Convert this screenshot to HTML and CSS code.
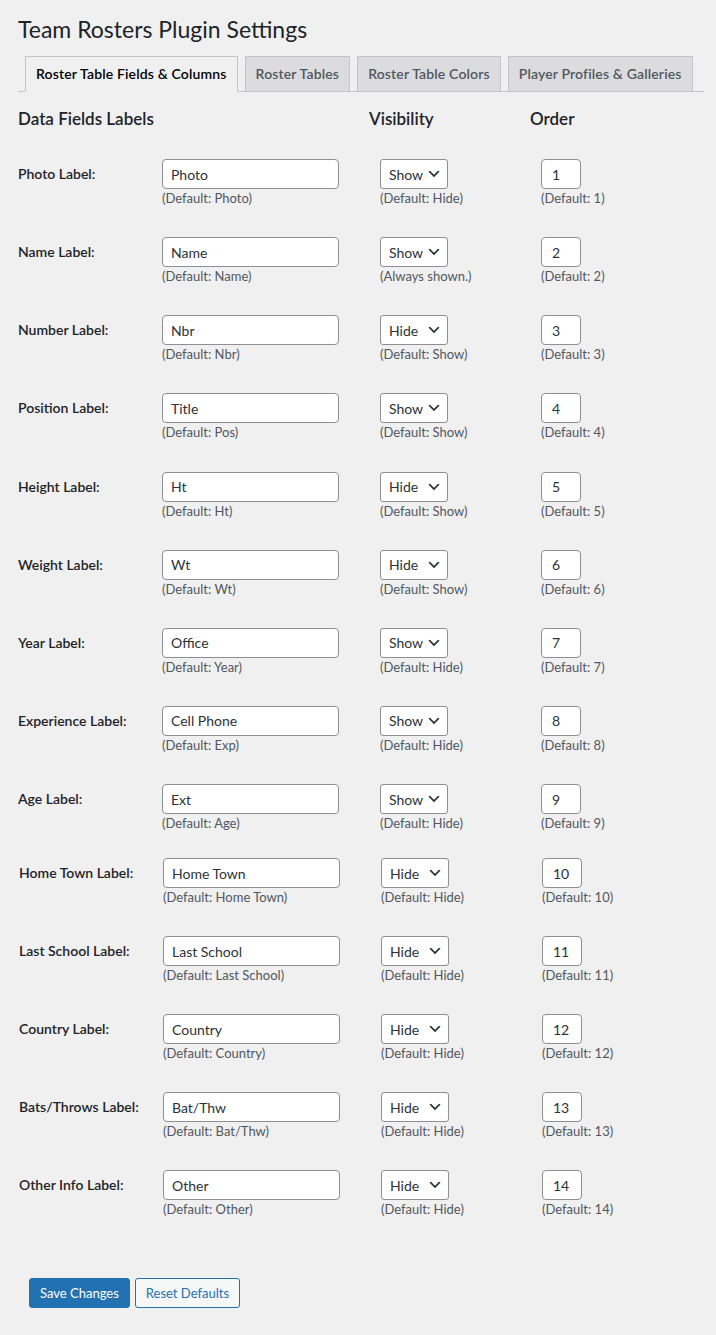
FILE: index.html
```html
<!DOCTYPE html>
<html lang="en">
<head>
<meta charset="utf-8">
<title>Team Rosters Plugin Settings</title>
<link rel="stylesheet" href="styles.css">
</head>
<body>
<div class="wrap">
  <h1 class="page-title">Team Rosters Plugin Settings</h1>
  <nav class="nav-tab-wrapper">
    <a class="nav-tab nav-tab-active" href="#">Roster Table Fields &amp; Columns</a>
    <a class="nav-tab" href="#">Roster Tables</a>
    <a class="nav-tab" href="#">Roster Table Colors</a>
    <a class="nav-tab" href="#">Player Profiles &amp; Galleries</a>
  </nav>
  <form class="settings-form">
    <div class="fields-head">
      <div class="head-cell">Data Fields Labels</div>
      <div class="head-cell"></div>
      <div class="head-cell">Visibility</div>
      <div class="head-cell">Order</div>
    </div>
    <div class="fields-table">
      <div class="field-row">
        <label class="field-label">Photo Label:</label>
        <div class="cell"><input class="text-input" type="text" value="Photo"><p class="desc">(Default: Photo)</p></div>
        <div class="cell cell-pad"><span class="select-wrap"><select class="vis-select"><option selected>Show</option><option>Hide</option></select><svg class="chev" viewBox="0 0 20 20"><path d="M5 6l5 5 5-5 2 1-7 7-7-7 2-1z"/></svg></span><p class="desc">(Default: Hide)</p></div>
        <div class="cell cell-pad"><input class="num-input" type="number" value="1"><p class="desc">(Default: 1)</p></div>
      </div>
      <div class="field-row">
        <label class="field-label">Name Label:</label>
        <div class="cell"><input class="text-input" type="text" value="Name"><p class="desc">(Default: Name)</p></div>
        <div class="cell cell-pad"><span class="select-wrap"><select class="vis-select"><option selected>Show</option><option>Hide</option></select><svg class="chev" viewBox="0 0 20 20"><path d="M5 6l5 5 5-5 2 1-7 7-7-7 2-1z"/></svg></span><p class="desc">(Always shown.)</p></div>
        <div class="cell cell-pad"><input class="num-input" type="number" value="2"><p class="desc">(Default: 2)</p></div>
      </div>
      <div class="field-row">
        <label class="field-label">Number Label:</label>
        <div class="cell"><input class="text-input" type="text" value="Nbr"><p class="desc">(Default: Nbr)</p></div>
        <div class="cell cell-pad"><span class="select-wrap"><select class="vis-select"><option>Show</option><option selected>Hide</option></select><svg class="chev" viewBox="0 0 20 20"><path d="M5 6l5 5 5-5 2 1-7 7-7-7 2-1z"/></svg></span><p class="desc">(Default: Show)</p></div>
        <div class="cell cell-pad"><input class="num-input" type="number" value="3"><p class="desc">(Default: 3)</p></div>
      </div>
      <div class="field-row">
        <label class="field-label">Position Label:</label>
        <div class="cell"><input class="text-input" type="text" value="Title"><p class="desc">(Default: Pos)</p></div>
        <div class="cell cell-pad"><span class="select-wrap"><select class="vis-select"><option selected>Show</option><option>Hide</option></select><svg class="chev" viewBox="0 0 20 20"><path d="M5 6l5 5 5-5 2 1-7 7-7-7 2-1z"/></svg></span><p class="desc">(Default: Show)</p></div>
        <div class="cell cell-pad"><input class="num-input" type="number" value="4"><p class="desc">(Default: 4)</p></div>
      </div>
      <div class="field-row">
        <label class="field-label">Height Label:</label>
        <div class="cell"><input class="text-input" type="text" value="Ht"><p class="desc">(Default: Ht)</p></div>
        <div class="cell cell-pad"><span class="select-wrap"><select class="vis-select"><option>Show</option><option selected>Hide</option></select><svg class="chev" viewBox="0 0 20 20"><path d="M5 6l5 5 5-5 2 1-7 7-7-7 2-1z"/></svg></span><p class="desc">(Default: Show)</p></div>
        <div class="cell cell-pad"><input class="num-input" type="number" value="5"><p class="desc">(Default: 5)</p></div>
      </div>
      <div class="field-row">
        <label class="field-label">Weight Label:</label>
        <div class="cell"><input class="text-input" type="text" value="Wt"><p class="desc">(Default: Wt)</p></div>
        <div class="cell cell-pad"><span class="select-wrap"><select class="vis-select"><option>Show</option><option selected>Hide</option></select><svg class="chev" viewBox="0 0 20 20"><path d="M5 6l5 5 5-5 2 1-7 7-7-7 2-1z"/></svg></span><p class="desc">(Default: Show)</p></div>
        <div class="cell cell-pad"><input class="num-input" type="number" value="6"><p class="desc">(Default: 6)</p></div>
      </div>
      <div class="field-row">
        <label class="field-label">Year Label:</label>
        <div class="cell"><input class="text-input" type="text" value="Office"><p class="desc">(Default: Year)</p></div>
        <div class="cell cell-pad"><span class="select-wrap"><select class="vis-select"><option selected>Show</option><option>Hide</option></select><svg class="chev" viewBox="0 0 20 20"><path d="M5 6l5 5 5-5 2 1-7 7-7-7 2-1z"/></svg></span><p class="desc">(Default: Hide)</p></div>
        <div class="cell cell-pad"><input class="num-input" type="number" value="7"><p class="desc">(Default: 7)</p></div>
      </div>
      <div class="field-row">
        <label class="field-label">Experience Label:</label>
        <div class="cell"><input class="text-input" type="text" value="Cell Phone"><p class="desc">(Default: Exp)</p></div>
        <div class="cell cell-pad"><span class="select-wrap"><select class="vis-select"><option selected>Show</option><option>Hide</option></select><svg class="chev" viewBox="0 0 20 20"><path d="M5 6l5 5 5-5 2 1-7 7-7-7 2-1z"/></svg></span><p class="desc">(Default: Hide)</p></div>
        <div class="cell cell-pad"><input class="num-input" type="number" value="8"><p class="desc">(Default: 8)</p></div>
      </div>
      <div class="field-row">
        <label class="field-label">Age Label:</label>
        <div class="cell"><input class="text-input" type="text" value="Ext"><p class="desc">(Default: Age)</p></div>
        <div class="cell cell-pad"><span class="select-wrap"><select class="vis-select"><option selected>Show</option><option>Hide</option></select><svg class="chev" viewBox="0 0 20 20"><path d="M5 6l5 5 5-5 2 1-7 7-7-7 2-1z"/></svg></span><p class="desc">(Default: Hide)</p></div>
        <div class="cell cell-pad"><input class="num-input" type="number" value="9"><p class="desc">(Default: 9)</p></div>
      </div>
    </div>
    <div class="fields-table fields-table-extra">
      <div class="field-row">
        <label class="field-label">Home Town Label:</label>
        <div class="cell"><input class="text-input" type="text" value="Home Town"><p class="desc">(Default: Home Town)</p></div>
        <div class="cell cell-pad"><span class="select-wrap"><select class="vis-select"><option>Show</option><option selected>Hide</option></select><svg class="chev" viewBox="0 0 20 20"><path d="M5 6l5 5 5-5 2 1-7 7-7-7 2-1z"/></svg></span><p class="desc">(Default: Hide)</p></div>
        <div class="cell cell-pad"><input class="num-input" type="number" value="10"><p class="desc">(Default: 10)</p></div>
      </div>
      <div class="field-row">
        <label class="field-label">Last School Label:</label>
        <div class="cell"><input class="text-input" type="text" value="Last School"><p class="desc">(Default: Last School)</p></div>
        <div class="cell cell-pad"><span class="select-wrap"><select class="vis-select"><option>Show</option><option selected>Hide</option></select><svg class="chev" viewBox="0 0 20 20"><path d="M5 6l5 5 5-5 2 1-7 7-7-7 2-1z"/></svg></span><p class="desc">(Default: Hide)</p></div>
        <div class="cell cell-pad"><input class="num-input" type="number" value="11"><p class="desc">(Default: 11)</p></div>
      </div>
      <div class="field-row">
        <label class="field-label">Country Label:</label>
        <div class="cell"><input class="text-input" type="text" value="Country"><p class="desc">(Default: Country)</p></div>
        <div class="cell cell-pad"><span class="select-wrap"><select class="vis-select"><option>Show</option><option selected>Hide</option></select><svg class="chev" viewBox="0 0 20 20"><path d="M5 6l5 5 5-5 2 1-7 7-7-7 2-1z"/></svg></span><p class="desc">(Default: Hide)</p></div>
        <div class="cell cell-pad"><input class="num-input" type="number" value="12"><p class="desc">(Default: 12)</p></div>
      </div>
      <div class="field-row">
        <label class="field-label">Bats/Throws Label:</label>
        <div class="cell"><input class="text-input" type="text" value="Bat/Thw"><p class="desc">(Default: Bat/Thw)</p></div>
        <div class="cell cell-pad"><span class="select-wrap"><select class="vis-select"><option>Show</option><option selected>Hide</option></select><svg class="chev" viewBox="0 0 20 20"><path d="M5 6l5 5 5-5 2 1-7 7-7-7 2-1z"/></svg></span><p class="desc">(Default: Hide)</p></div>
        <div class="cell cell-pad"><input class="num-input" type="number" value="13"><p class="desc">(Default: 13)</p></div>
      </div>
      <div class="field-row">
        <label class="field-label">Other Info Label:</label>
        <div class="cell"><input class="text-input" type="text" value="Other"><p class="desc">(Default: Other)</p></div>
        <div class="cell cell-pad"><span class="select-wrap"><select class="vis-select"><option>Show</option><option selected>Hide</option></select><svg class="chev" viewBox="0 0 20 20"><path d="M5 6l5 5 5-5 2 1-7 7-7-7 2-1z"/></svg></span><p class="desc">(Default: Hide)</p></div>
        <div class="cell cell-pad"><input class="num-input" type="number" value="14"><p class="desc">(Default: 14)</p></div>
      </div>
    </div>
    <p class="submit">
      <button type="submit" class="button button-primary">Save Changes</button>
      <button type="button" class="button button-secondary">Reset Defaults</button>
    </p>
  </form>
</div>
</body>
</html>
```

FILE: styles.css
```css
:root { --f: Lato, "Noto Sans", sans-serif; }
html, body { margin: 0; padding: 0; background: #f0f0f1; }
body { font-family: var(--f); color: #1d2327; font-size: 13px; }
.wrap { padding: 0 12px 0 18px; }
.page-title { font-size: 23px; font-weight: 400; margin: 0; padding: 14px 0 3px; line-height: 30px; }
.nav-tab-wrapper { display: flex; border-bottom: 1px solid #c3c4c7; padding-top: 9px; }
.nav-tab { margin-left: 7px; padding: 5px 10px; border: 1px solid #c3c4c7; border-bottom: none; background: #dcdcde; color: #50575e; font-size: 14px; font-weight: 600; line-height: 24px; letter-spacing: 0.15px; text-decoration: none; white-space: nowrap; }
.nav-tab-active { background: #f0f0f1; color: #000; margin-bottom: -1px; border-bottom: 1px solid #f0f0f1; }
.fields-head { display: grid; grid-template-columns: 144px 207px 161px 1fr; padding-top: 15px; height: 52px; }
.head-cell { font-size: 17px; font-weight: 600; line-height: 24px; white-space: nowrap; }
.field-row { display: grid; grid-template-columns: 144px 207px 161px 1fr; height: 78.125px; }
.fields-table-extra { margin: -4.125px 0 0 1px; }
.fields-table-extra .field-row { height: 78px; }
.field-label { font-size: 14px; font-weight: 600; line-height: 30px; white-space: nowrap; }
.cell-pad { padding-left: 11px; }
.text-input { box-sizing: border-box; width: 177px; height: 30px; border: 1px solid #8c8f94; border-radius: 4px; padding: 0 8px; font: 14px var(--f); color: #2c3338; background: #fff; margin: 0; display: block; }
.select-wrap { position: relative; display: block; width: 68px; height: 30px; }
.vis-select { appearance: none; -webkit-appearance: none; box-sizing: border-box; width: 68px; height: 30px; border: 1px solid #8c8f94; border-radius: 3px; padding: 0 24px 0 8px; font: 14px var(--f); color: #2c3338; background: #fff; margin: 0; display: block; }
.chev { position: absolute; right: 6px; top: 7px; width: 16px; height: 16px; fill: #2c3338; pointer-events: none; }
.num-input { box-sizing: border-box; width: 40px; height: 30px; border: 1px solid #8c8f94; border-radius: 4px; padding: 0 8px 0 10px; font: 14px var(--f); color: #2c3338; background: #fff; margin: 0; display: block; appearance: textfield; -moz-appearance: textfield; }
.num-input::-webkit-inner-spin-button, .num-input::-webkit-outer-spin-button { -webkit-appearance: none; margin: 0; }
.desc { margin: 0; font-size: 13px; line-height: 19.5px; color: #50575e; white-space: nowrap; }
.submit { margin: 30px 0 0 11px; display: flex; gap: 5px; }
.button { box-sizing: border-box; height: 30px; padding: 0 10px; border-radius: 3px; font: 13px var(--f); line-height: 28px; cursor: pointer; }
.button-primary { background: #2271b1; border: 1px solid #2271b1; color: #fff; }
.button-secondary { background: #f6f7f7; border: 1px solid #2271b1; color: #2271b1; }
```
